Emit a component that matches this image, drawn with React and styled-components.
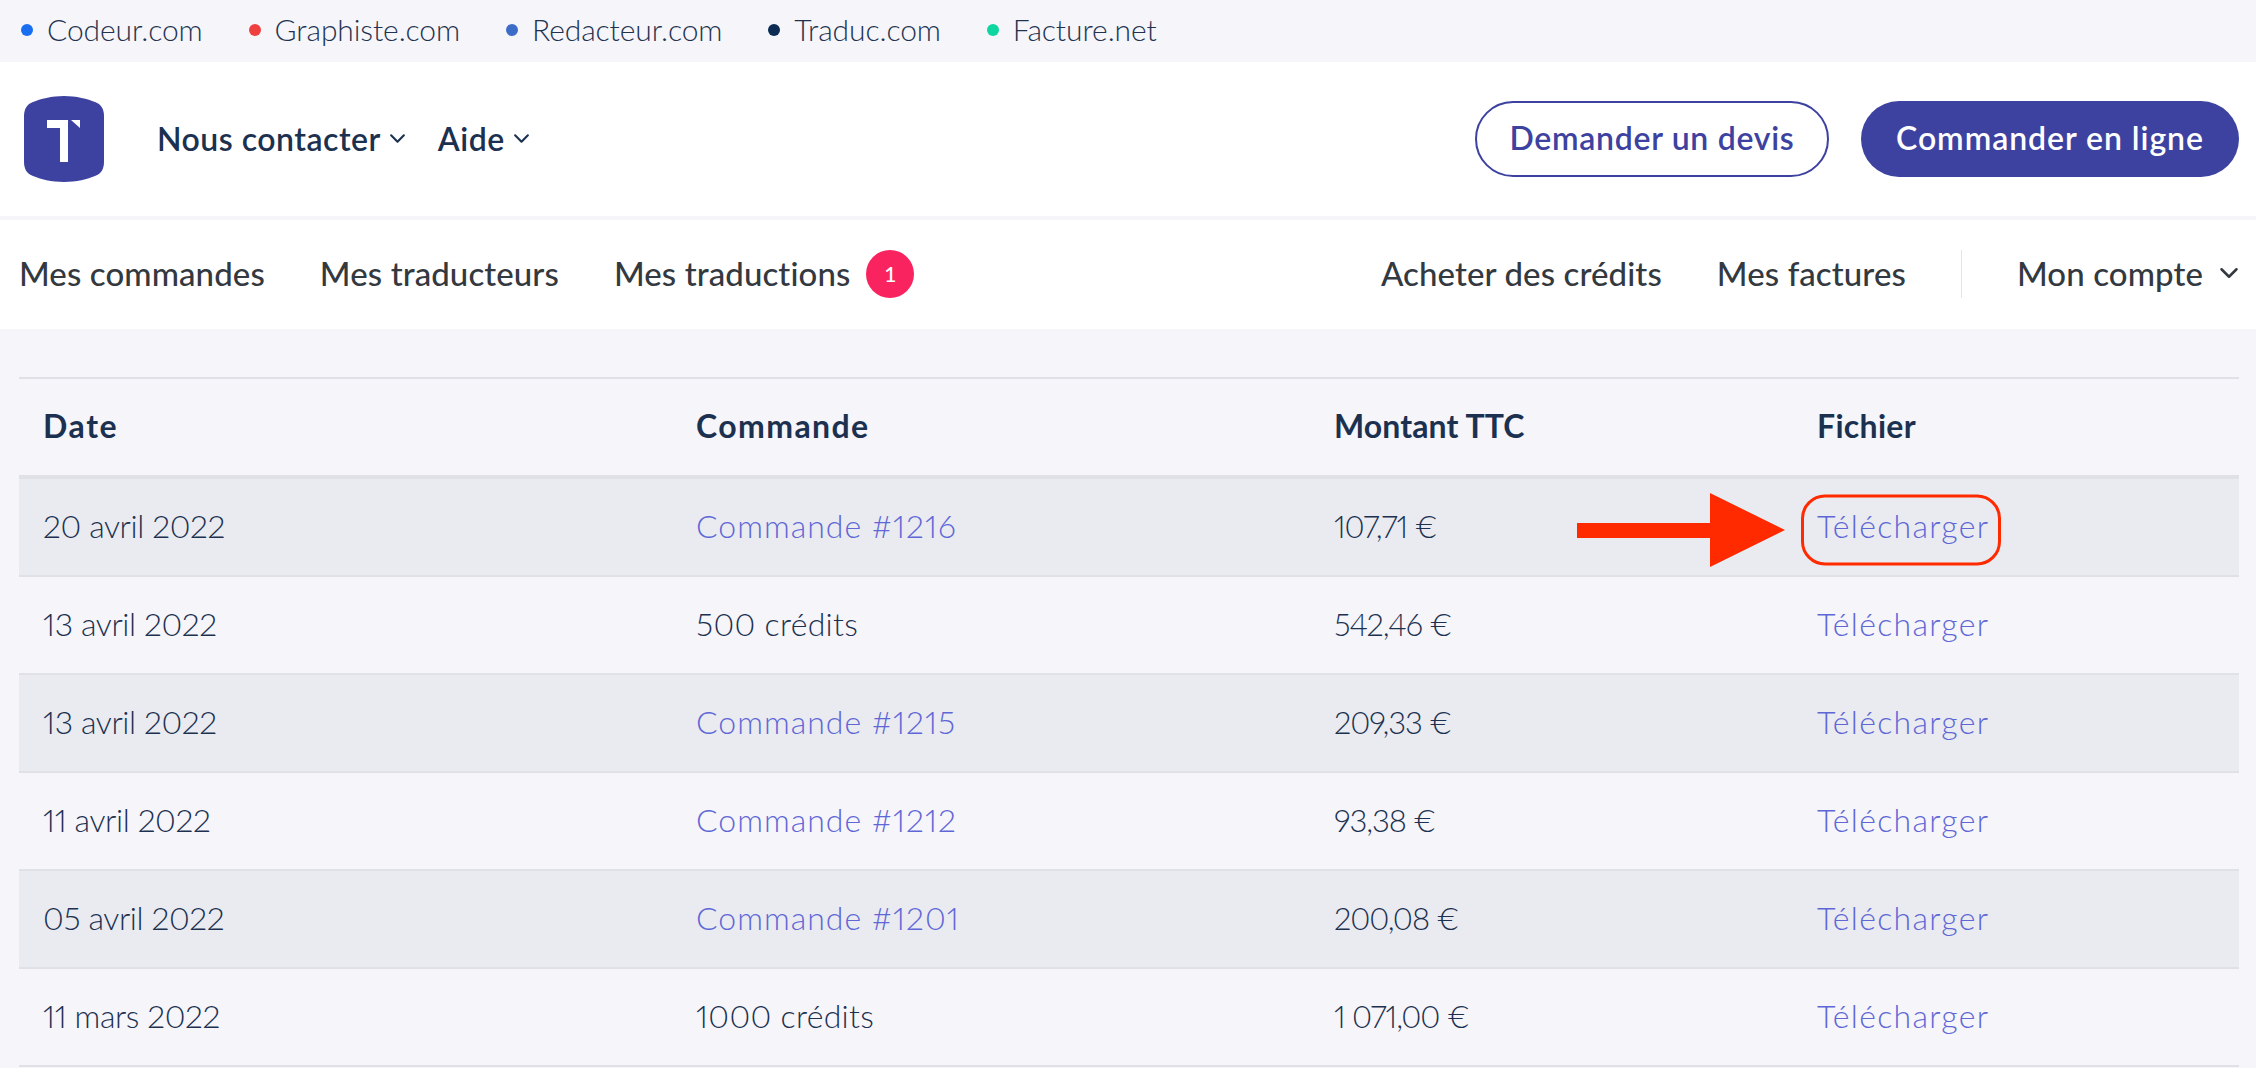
import React from "react";
import styled, { createGlobalStyle } from "styled-components";

const SITES = [
  { name: "Codeur.com", dot: "#1a6ff0" },
  { name: "Graphiste.com", dot: "#ef4040" },
  { name: "Redacteur.com", dot: "#3d6cc8" },
  { name: "Traduc.com", dot: "#0c2c54" },
  { name: "Facture.net", dot: "#0ed6a0" },
];

const ROWS = [
  { date: "20 avril 2022", order: "Commande #1216", link: true, amount: "107,71 €", marked: true },
  { date: "13 avril 2022", order: "500 crédits", amount: "542,46 €" },
  { date: "13 avril 2022", order: "Commande #1215", link: true, amount: "209,33 €" },
  { date: "11 avril 2022", order: "Commande #1212", link: true, amount: "93,38 €" },
  { date: "05 avril 2022", order: "Commande #1201", link: true, amount: "200,08 €" },
  { date: "11 mars 2022", order: "1000 crédits", amount: "1 071,00 €" },
];

const Chevron = ({ size = 17 }) => (
  <svg width={size} height={size} viewBox="0 0 16 16" fill="none" stroke="currentColor" strokeWidth="2" strokeLinecap="round" strokeLinejoin="round" aria-hidden="true">
    <path d="M2 5l6 6 6-6" />
  </svg>
);

const Logo = () => (
  <svg width="80" height="86" viewBox="0 0 80 86" aria-hidden="true">
    <path
      d="M40 0C52 0 64 3 71 6C77 8 80 13 80 20V66C80 73 77 78 71 80C64 83 52 86 40 86C28 86 16 83 9 80C3 78 0 73 0 66V20C0 13 3 8 9 6C16 3 28 0 40 0Z"
      fill="#3d42a0"
    />
    <path d="M23 24H44V66H36V32H23Z" fill="#fff" />
    <path d="M47 24H56V32Z" fill="#fff" />
  </svg>
);

export default function App() {
  return (
    <>
      <GlobalStyle />
      <TopBar>
        {SITES.map((site) => (
          <SiteLink key={site.name}>
            <Dot $color={site.dot} />
            {site.name}
          </SiteLink>
        ))}
      </TopBar>

      <Header>
        <Logo />
        <HeaderMenu>
          <HeaderItem>
            Nous contacter <Chevron />
          </HeaderItem>
          <HeaderItem>
            Aide <Chevron />
          </HeaderItem>
        </HeaderMenu>
        <HeaderActions>
          <OutlineButton type="button">Demander un devis</OutlineButton>
          <SolidButton type="button">Commander en ligne</SolidButton>
        </HeaderActions>
      </Header>

      <Nav>
        <NavGroup>
          <NavItem>Mes commandes</NavItem>
          <NavItem>Mes traducteurs</NavItem>
          <NavItem>
            Mes traductions
            <Badge>1</Badge>
          </NavItem>
        </NavGroup>
        <NavGroup>
          <NavItem>Acheter des crédits</NavItem>
          <NavItem>Mes factures</NavItem>
          <NavDivider />
          <NavItem>
            Mon compte <Chevron size={20} />
          </NavItem>
        </NavGroup>
      </Nav>

      <Main>
        <Table>
          <thead>
            <tr>
              <HeadCell $width="653px" $tracking="1.6px">Date</HeadCell>
              <HeadCell $width="638px" $tracking="1.4px">Commande</HeadCell>
              <HeadCell $width="483px">Montant TTC</HeadCell>
              <HeadCell $tracking="0.3px">Fichier</HeadCell>
            </tr>
          </thead>
          <tbody>
            {ROWS.map((row, i) => (
              <Row key={i} $shaded={i % 2 === 0}>
                <Cell>{row.date}</Cell>
                <Cell $tracking="0.3px">{row.link ? <OrderLink href="#">{row.order}</OrderLink> : row.order}</Cell>
                <AmountCell>{row.amount}</AmountCell>
                <Cell>
                  <FileWrap>
                    {row.marked && (
                      <>
                        <Arrow width="208" height="74" viewBox="0 0 208 74" aria-hidden="true">
                          <path d="M0 30H133V0L208 37L133 74V45H0Z" fill="#ff2a00" />
                        </Arrow>
                        <Ring />
                      </>
                    )}
                    <DownloadLink href="#">Télécharger</DownloadLink>
                  </FileWrap>
                </Cell>
              </Row>
            ))}
          </tbody>
        </Table>
      </Main>
    </>
  );
}

const GlobalStyle = createGlobalStyle`
  body {
    margin: 0;
    background: #f5f5fa;
    font-family: Lato, "Liberation Sans", sans-serif;
    color: #1c3150;
  }
`;

const TopBar = styled.div`
  height: 58px;
  padding: 0 0 4px 21px;
  display: flex;
  align-items: center;
  gap: 46px;
`;

const SiteLink = styled.a`
  display: flex;
  align-items: center;
  gap: 14px;
  font-size: 30px;
  font-weight: 300;
  letter-spacing: -0.1px;
  color: #1f3350;
`;

const Dot = styled.span`
  width: 12px;
  height: 12px;
  border-radius: 50%;
  background: ${(p) => p.$color};
  transform: translateY(1px);
`;

const Header = styled.header`
  height: 154px;
  margin-bottom: 4px;
  background: #fff;
  display: flex;
  align-items: center;
  padding: 0 17px 0 24px;
`;

const HeaderMenu = styled.div`
  display: flex;
  gap: 32px;
  margin-left: 53px;
  padding-bottom: 2px;
`;

const HeaderItem = styled.div`
  display: flex;
  align-items: center;
  gap: 8px;
  font-size: 32px;
  font-weight: 600;
  letter-spacing: 0.5px;
  color: #1c3150;
`;

const HeaderActions = styled.div`
  margin-left: auto;
  display: flex;
  gap: 32px;
`;

const OutlineButton = styled.button`
  width: 354px;
  height: 76px;
  padding: 0 0 3px;
  border-radius: 38px;
  border: 2px solid #3d42a0;
  background: #fff;
  color: #3d42a0;
  font: 600 32px Lato, sans-serif;
  letter-spacing: 0.7px;
`;

const SolidButton = styled.button`
  width: 378px;
  height: 76px;
  padding: 0 0 3px;
  border-radius: 38px;
  border: 0;
  background: #3d42a0;
  color: #fff;
  font: 600 32px Lato, sans-serif;
  letter-spacing: 0.95px;
`;

const Nav = styled.nav`
  height: 105px;
  background: #fff;
  display: flex;
  align-items: center;
  justify-content: space-between;
  padding: 0 17px 4px 19px;
`;

const NavGroup = styled.div`
  display: flex;
  align-items: center;
  gap: 55px;
`;

const NavItem = styled.a`
  display: flex;
  align-items: center;
  gap: 16px;
  font-size: 33px;
  font-weight: 500;
  letter-spacing: 0.1px;
  color: #33393f;
`;

const NavDivider = styled.span`
  width: 1px;
  height: 48px;
  background: #e5e5e8;
  transform: translateY(1px);
`;

const Badge = styled.span`
  width: 48px;
  height: 48px;
  border-radius: 50%;
  background: #f9245f;
  color: #fff;
  font-size: 21px;
  letter-spacing: 0;
  display: grid;
  place-items: center;
  transform: translateY(1px);
`;

const Main = styled.main`
  padding: 48px 17px 0 19px;
`;

const Table = styled.table`
  width: 100%;
  border-collapse: separate;
  border-spacing: 0;
  table-layout: fixed;
  border-top: 2px solid #dfe1e6;
  font-variant-numeric: proportional-nums;
`;

const HeadCell = styled.th`
  box-sizing: border-box;
  width: ${(p) => p.$width || "auto"};
  height: 100px;
  padding: 0 24px 3px;
  text-align: left;
  font-size: 32px;
  font-weight: 700;
  letter-spacing: ${(p) => p.$tracking || "0.1px"};
  color: #1c3150;
  border-bottom: 4px solid #dfe1e6;
`;

const Row = styled.tr`
  background: ${(p) => (p.$shaded ? "#e9ebf0" : "transparent")};
`;

const Cell = styled.td`
  box-sizing: border-box;
  height: 98px;
  padding: 0 24px 3px;
  font-size: 32px;
  font-weight: 300;
  letter-spacing: ${(p) => p.$tracking || "-0.4px"};
  color: #1c3150;
  border-bottom: 2px solid #dfe1e6;
`;

const AmountCell = styled(Cell)`
  font-size: 31px;
  letter-spacing: -1.1px;
`;

const TextLink = styled.a`
  color: #5f67d6;
  text-decoration: none;
`;

const OrderLink = styled(TextLink)`
  letter-spacing: 1px;
`;

const DownloadLink = styled(TextLink)`
  letter-spacing: 1.3px;
`;

const FileWrap = styled.div`
  position: relative;
`;

const Arrow = styled.svg`
  position: absolute;
  right: 100%;
  top: calc(50% + 4px);
  margin-right: 32px;
  transform: translateY(-50%);
`;

const Ring = styled.span`
  position: absolute;
  left: -16px;
  top: calc(50% + 4px);
  width: 200px;
  height: 71px;
  box-sizing: border-box;
  transform: translateY(-50%);
  border: 3.5px solid #ff2a00;
  border-radius: 24px;
`;
